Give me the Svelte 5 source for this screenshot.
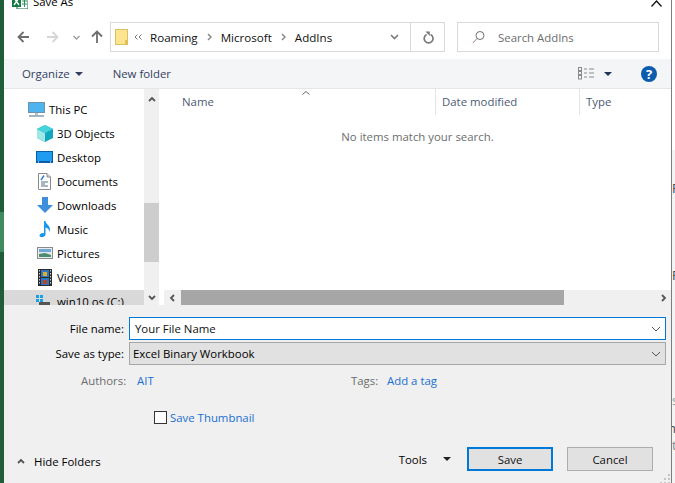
<script lang="ts">
	const folders = [
		{ name: '3D Objects', icon: 'cube' },
		{ name: 'Desktop', icon: 'desktop' },
		{ name: 'Documents', icon: 'doc' },
		{ name: 'Downloads', icon: 'down' },
		{ name: 'Music', icon: 'music' },
		{ name: 'Pictures', icon: 'pic' },
		{ name: 'Videos', icon: 'video' }
	];
</script>

<div class="screen">
	<div class="strip"></div>
	<div class="dialog">
		<div class="title">
			<svg class="xl" width="16" height="14" viewBox="0 0 16 14">
				<rect x="5" y="0" width="11" height="14" fill="#fff" stroke="#1d6f42" />
				<path d="M10 3 H15 M10 6 H15 M10 9 H15 M12.5 1 V12" stroke="#2f8f5b" />
				<rect x="0" y="1" width="9" height="11" fill="#107c41" />
				<path d="M2 3 L7 10 M7 3 L2 10" stroke="#fff" stroke-width="1.4" />
			</svg>
			<span class="title-text">Save As</span>
			<svg class="close" width="11" height="7" viewBox="0 0 11 7"><path d="M0.5 6.5 L5.5 1 L10.5 6.5" fill="none" stroke="#111" stroke-width="1.3" /></svg>
		</div>

		<div class="navbar">
			<div class="navbtns">
				<svg class="back" width="12" height="12" viewBox="0 0 12 12"><path d="M12 6 H1.5 M6.5 1 L1.5 6 L6.5 11" fill="none" stroke="#6d6d6d" stroke-width="1.8" /></svg>
				<svg class="forward" width="12" height="12" viewBox="0 0 12 12"><path d="M0 6 H10.5 M5.5 1 L10.5 6 L5.5 11" fill="none" stroke="#d6d6d6" stroke-width="1.8" /></svg>
				<svg class="recent" width="7" height="5" viewBox="0 0 7 5"><path d="M0.5 1 L3.5 4 L6.5 1" fill="none" stroke="#9a9a9a" stroke-width="1.4" /></svg>
				<svg class="up" width="12" height="13" viewBox="0 0 12 13"><path d="M6 13 V2 M1 6.5 L6 1.5 L11 6.5" fill="none" stroke="#6d6d6d" stroke-width="1.8" /></svg>
			</div>
			<div class="address">
				<svg class="folder" width="13" height="16" viewBox="0 0 13 16">
					<rect x="0.5" y="0.5" width="12" height="15" fill="#fde58f" stroke="#dcc064" />
					<rect x="10" y="11" width="2.5" height="4.5" fill="#e3bf52" />
				</svg>
				<svg class="chev" width="8" height="6" viewBox="0 0 8 6"><path d="M3.5 0.5 L1 3 L3.5 5.5 M7.5 0.5 L5 3 L7.5 5.5" fill="none" stroke="#7a7a7a" stroke-width="1" /></svg>
				<span class="crumb">Roaming</span>
				<svg class="sep" width="5" height="8" viewBox="0 0 5 8"><path d="M1 1 L4 4 L1 7" fill="none" stroke="#8a8a8a" stroke-width="1.5" /></svg>
				<span class="crumb">Microsoft</span>
				<svg class="sep" width="5" height="8" viewBox="0 0 5 8"><path d="M1 1 L4 4 L1 7" fill="none" stroke="#8a8a8a" stroke-width="1.5" /></svg>
				<span class="crumb">AddIns</span>
				<div class="addr-end">
					<svg width="9" height="6" viewBox="0 0 9 6"><path d="M1 1 L4.5 4.5 L8 1" fill="none" stroke="#7a7a7a" stroke-width="1.6" /></svg>
				</div>
				<div class="refresh">
					<svg width="11" height="13" viewBox="0 0 11 13"><path d="M3.6 3.6 A4.4 4.4 0 1 0 7.6 3.6" fill="none" stroke="#7a7a7a" stroke-width="1.7" /><path d="M2.4 0.6 L6.8 0.6 L6.8 5 Z" fill="#7a7a7a" /></svg>
				</div>
			</div>
			<div class="search">
				<svg width="13" height="14" viewBox="0 0 13 14"><circle cx="8" cy="5.5" r="4" fill="none" stroke="#707070" /><path d="M5 8.5 L0.8 13" stroke="#a87a70" stroke-width="1" /></svg>
				<span>Search AddIns</span>
			</div>
		</div>

		<div class="toolbar">
			<span>Organize</span>
			<span class="caret"></span>
			<span class="newfolder">New folder</span>
			<div class="toolright">
				<svg width="16" height="13" viewBox="0 0 16 13">
					<g fill="none" stroke="#8a8a8a"><rect x="0.5" y="0.5" width="3" height="3" /><rect x="0.5" y="4.5" width="3" height="3" /><rect x="0.5" y="8.5" width="3" height="3.5" /></g>
					<path d="M6 2 H9 M11 2 H16 M6 6 H9 M11 6 H16 M6 10 H9 M11 10 H16" stroke="#8a8a8a" />
				</svg>
				<span class="caret dark"></span>
				<span class="help">?</span>
			</div>
		</div>

		<div class="browser">
			<div class="tree">
				<div class="tree-list">
					<div class="row pc">
						<svg width="17" height="15" viewBox="0 0 17 15">
							<rect x="0.5" y="0.5" width="16" height="10" fill="#4fb4ee" stroke="#6f93a8" />
							<rect x="7" y="11" width="3" height="2" fill="#b8c4cc" />
							<rect x="1" y="13" width="15" height="2" fill="#a3b4bf" />
						</svg>
						<span>This PC</span>
					</div>
					{#each folders as f}
						<div class="row">
							<span class="ico">
								{#if f.icon === 'cube'}
									<svg width="16" height="17" viewBox="0 0 16 17">
										<path d="M8 0 L16 4 V13 L8 17 L0 13 V4 Z" fill="#14a6bd" />
										<path d="M0 4 L8 8 V17 L0 13 Z" fill="#9fe8e8" />
										<path d="M0 4 L8 0 L16 4 L8 8 Z" fill="#46d3dc" />
									</svg>
								{:else if f.icon === 'desktop'}
									<svg width="17" height="12" viewBox="0 0 17 12">
										<rect x="0" y="0" width="17" height="12" fill="#0c5ea8" />
										<rect x="1" y="1" width="15" height="9" fill="#1f9bf0" />
										<path d="M2 11 H3 M14 11 H15" stroke="#fff" />
									</svg>
								{:else if f.icon === 'doc'}
									<svg width="13" height="17" viewBox="0 0 13 17">
										<path d="M0.5 0.5 H9 L12.5 4 V16.5 H0.5 Z" fill="#fff" stroke="#8a8a8a" />
										<path d="M9 0.5 V4 H12.5" fill="#ddd" stroke="#8a8a8a" />
										<path d="M6 2.5 L3 7" stroke="#2b7cd3" stroke-width="1.4" />
										<path d="M3 9 H10 M3 11 H7 M3 13 H10" stroke="#4f6f86" />
									</svg>
								{:else if f.icon === 'down'}
									<svg width="16" height="16" viewBox="0 0 16 16"><path d="M5 0 H11 V8 H16 L8 16 L0 8 H5 Z" fill="#3d8fdc" /></svg>
								{:else if f.icon === 'music'}
									<svg width="12" height="17" viewBox="0 0 12 17"><path d="M5 0 H6.5 C7 4 12.5 4.5 10.5 11 C10.3 8 8 7 6.5 6.5 V13.5 C6.5 16 0.5 17.5 0.5 14.5 C0.5 12.5 3.5 11.5 5 12.2 Z" fill="#1a96ea" /></svg>
								{:else if f.icon === 'pic'}
									<svg width="16" height="12" viewBox="0 0 16 12">
										<rect x="0.5" y="0.5" width="15" height="11" fill="#e8eef0" stroke="#8a8a8a" />
										<rect x="2" y="2" width="12" height="3" fill="#6fa8d8" />
										<rect x="2" y="5" width="12" height="2" fill="#dce6e2" />
										<path d="M2 7 L8 6 L14 8 V10 H2 Z" fill="#4f8a72" />
									</svg>
								{:else}
									<svg width="14" height="17" viewBox="0 0 14 17">
										<rect x="0" y="0" width="14" height="17" fill="#2b2b2b" />
										<path d="M1.5 1 V16 M12.5 1 V16" stroke="#cfcfcf" stroke-dasharray="1.5 1.5" />
										<rect x="3" y="1" width="8" height="7" fill="#2d77c4" />
										<rect x="3" y="9" width="8" height="7" fill="#2d77c4" />
										<rect x="5" y="3" width="4" height="4" fill="#d8b02e" />
										<rect x="5" y="11" width="4" height="4" fill="#b3472e" />
									</svg>
								{/if}
							</span>
							<span>{f.name}</span>
						</div>
					{/each}
					<div class="row drive">
						<span class="ico top">
							<svg width="17" height="17" viewBox="0 0 17 17">
								<rect x="0" y="0" width="3" height="3" fill="#19a0ea" />
								<rect x="4" y="0" width="3" height="3" fill="#19a0ea" />
								<rect x="0" y="4" width="3" height="3" fill="#19a0ea" />
								<rect x="4" y="4" width="3" height="3" fill="#19a0ea" />
								<rect x="3" y="7" width="11" height="8" fill="#555" />
							</svg>
						</span>
						<span>win10 os (C:)</span>
					</div>
				</div>
				<div class="vscroll">
					<svg width="8" height="6" viewBox="0 0 8 6"><path d="M1 5 L4 2 L7 5" fill="none" stroke="#555" stroke-width="1.8" /></svg>
					<div class="vtrack"><div class="vthumb"></div></div>
					<svg width="8" height="6" viewBox="0 0 8 6"><path d="M1 1 L4 4 L7 1" fill="none" stroke="#555" stroke-width="1.8" /></svg>
				</div>
			</div>
			<div class="files">
				<div class="head">
					<div class="col name">Name<svg class="sort" width="8" height="4" viewBox="0 0 8 4"><path d="M0.5 3.5 L4 0.5 L7.5 3.5" fill="none" stroke="#666" /></svg></div>
					<div class="col date">Date modified</div>
					<div class="col type">Type</div>
				</div>
				<div class="empty">No items match your search.</div>
				<div class="hscroll">
					<svg width="6" height="8" viewBox="0 0 6 8"><path d="M5 1 L2 4 L5 7" fill="none" stroke="#555" stroke-width="1.8" /></svg>
					<div class="htrack"><div class="hthumb"></div></div>
					<svg width="6" height="8" viewBox="0 0 6 8"><path d="M1 1 L4 4 L1 7" fill="none" stroke="#555" stroke-width="1.8" /></svg>
				</div>
			</div>
		</div>

		<div class="form">
			<div class="field">
				<label for="fname">File name:</label>
				<div class="combo active">
					<input id="fname" value="Your File Name" />
					<svg width="10" height="6" viewBox="0 0 10 6"><path d="M1 1 L5 5 L9 1" fill="none" stroke="#555" /></svg>
				</div>
			</div>
			<div class="field second">
				<span class="lbl">Save as type:</span>
				<div class="combo grey">
					<span>Excel Binary Workbook</span>
					<svg width="10" height="6" viewBox="0 0 10 6"><path d="M1 1 L5 5 L9 1" fill="none" stroke="#555" /></svg>
				</div>
			</div>
			<div class="meta">
				<span class="meta-lbl authors">Authors:</span>
				<span class="link ait">AIT</span>
				<span class="meta-lbl tags">Tags:</span>
				<span class="link addtag">Add a tag</span>
			</div>
			<div class="thumb">
				<span class="box"></span>
				<span class="link">Save Thumbnail</span>
			</div>
			<div class="footer">
				<div class="hide">
					<svg width="8" height="6" viewBox="0 0 8 6"><path d="M1 5 L4 2 L7 5" fill="none" stroke="#555" stroke-width="1.8" /></svg>
					<span>Hide Folders</span>
				</div>
				<div class="actions">
					<span>Tools</span>
					<span class="caret dark2"></span>
					<button class="btn primary">Save</button>
					<button class="btn">Cancel</button>
				</div>
			</div>
			<svg class="grip" width="10" height="10" viewBox="0 0 10 10">
				<path d="M8 1 H10 V3 H8 Z M4 5 H6 V7 H4 Z M8 5 H10 V7 H8 Z M0 9 H2 V10 H0 Z M4 9 H6 V10 H4 Z M8 9 H10 V10 H8 Z" fill="#c4c4c4" />
			</svg>
		</div>
	</div>
	<div class="behind">
		<span class="frag f1">F</span>
		<span class="frag f2">F</span>
		<span class="frag f3">s</span>
		<span class="frag f4">n</span>
		<span class="frag f5">t</span>
	</div>
</div>

<style>
	:global(body) {
		margin: 0;
		background: #fff;
	}

	.screen {
		display: flex;
		width: 675px;
		height: 483px;
		overflow: hidden;
		font-family: 'Open Sans', 'Noto Sans', sans-serif;
		font-size: 11.4px;
		color: #000;
	}

	.strip {
		width: 4px;
		flex: none;
		background: linear-gradient(#1e5f3a 0 212px, #3f8a5e 212px 252px, #1e5f3a 252px);
	}

	.dialog {
		width: 668px;
		flex: none;
		display: flex;
		flex-direction: column;
		background: #fff;
		border-right: 1px solid #7d7d7d;
		box-sizing: border-box;
	}

	.behind {
		flex: 1;
		position: relative;
		background: linear-gradient(#fff 0 150px, #f4f4f4 150px);
		overflow: hidden;
	}

	.frag {
		position: absolute;
		left: 0;
		color: #444;
		font-size: 13px;
		line-height: 14px;
	}

	.f1 {
		top: 181px;
	}

	.f2 {
		top: 268px;
	}

	.f3 {
		top: 393px;
		color: #999;
	}

	.f4 {
		top: 421px;
		left: -4px;
	}

	.f5 {
		top: 438px;
		color: #888;
	}

	.title {
		height: 27px;
		display: flex;
		align-items: flex-start;
		padding-left: 8px;
		margin-top: -5px;
		flex: none;
	}

	.title-text {
		margin-left: 5px;
		line-height: 14px;
	}

	.close {
		margin-left: auto;
		margin-right: 9px;
		margin-top: 5px;
	}

	.navbar {
		height: 30px;
		display: flex;
		align-items: center;
		flex: none;
	}

	.navbtns {
		width: 106px;
		display: flex;
		align-items: center;
		padding-left: 13px;
		box-sizing: border-box;
	}

	.forward {
		margin-left: 18px;
	}

	.recent {
		margin-left: 14px;
	}

	.up {
		margin-left: 11px;
		margin-top: -1px;
	}

	.address {
		width: 335px;
		height: 30px;
		border: 1px solid #d9d9d9;
		box-sizing: border-box;
		display: flex;
		align-items: center;
		padding-left: 4px;
	}

	.chev {
		margin-left: 6px;
		margin-right: 8px;
	}

	.crumb {
		color: #111;
		font-size: 11.6px;
	}

	.sep {
		margin: 0 9px;
	}

	.addr-end {
		margin-left: auto;
		width: 32px;
		height: 100%;
		display: flex;
		align-items: center;
		justify-content: center;
		border-right: 1px solid #d9d9d9;
		box-sizing: border-box;
	}

	.refresh {
		width: 33px;
		padding-left: 2px;
		box-sizing: border-box;
		display: flex;
		justify-content: center;
	}

	.search {
		width: 202px;
		height: 30px;
		margin-left: 12px;
		border: 1px solid #d9d9d9;
		box-sizing: border-box;
		display: flex;
		align-items: center;
		padding-left: 14px;
		gap: 13px;
		color: #6d6d6d;
	}

	.toolbar {
		height: 30px;
		flex: none;
		background: #f4f5f7;
		border-bottom: 1px solid #e6e6e6;
		box-sizing: border-box;
		display: flex;
		align-items: center;
		padding-left: 18px;
		color: #33415f;
		margin-top: 7px;
	}

	.caret {
		width: 0;
		height: 0;
		border-left: 4px solid transparent;
		border-right: 4px solid transparent;
		border-top: 4px solid #33415f;
		margin-left: 5px;
	}

	.newfolder {
		margin-left: 30px;
	}

	.toolright {
		margin-left: auto;
		display: flex;
		align-items: center;
	}

	.caret.dark {
		margin-left: 10px;
		border-top-color: #1d3557;
	}

	.help {
		margin: 0 14px 0 29px;
		width: 16px;
		height: 16px;
		border-radius: 50%;
		background: #0b5cad;
		color: #fff;
		font-weight: 700;
		font-size: 13px;
		line-height: 16px;
		text-align: center;
	}

	.browser {
		height: 216px;
		flex: none;
		display: flex;
	}

	.tree {
		width: 155px;
		flex: none;
		display: flex;
		overflow: hidden;
	}

	.tree-list {
		width: 140px;
		flex: none;
		padding-top: 9px;
		box-sizing: border-box;
		overflow: hidden;
	}

	.row {
		height: 24px;
		display: flex;
		align-items: center;
		padding-left: 32px;
	}

	.row.pc {
		height: 23px;
		padding-left: 24px;
		gap: 4px;
	}

	.ico {
		width: 17px;
		margin-right: 4px;
		display: flex;
		justify-content: center;
	}

	.ico.top {
		align-self: flex-end;
	}

	.row.drive {
		background: #d9d9d9;
		margin-top: 1px;
		height: 22px;
	}

	.vscroll {
		width: 15px;
		flex: none;
		height: 216px;
		background: #f0f0f0;
		display: flex;
		flex-direction: column;
		align-items: center;
		padding: 7px 0 4px;
		box-sizing: border-box;
	}

	.vtrack {
		flex: 1;
		width: 100%;
		margin: 5px 0;
		position: relative;
	}

	.vthumb {
		position: absolute;
		top: 96px;
		height: 59px;
		width: 100%;
		background: #cdcdcd;
	}

	.files {
		flex: 1;
		min-width: 0;
		margin-left: 5px;
		display: flex;
		flex-direction: column;
	}

	.head {
		height: 26px;
		flex: none;
		display: flex;
		color: #4d5a75;
	}

	.col {
		line-height: 26px;
		border-right: 1px solid #e5e5e5;
		box-sizing: border-box;
		position: relative;
		padding-left: 6px;
	}

	.col.name {
		width: 272px;
		padding-left: 18px;
	}

	.sort {
		position: absolute;
		left: 138px;
		top: 2px;
	}

	.col.date {
		width: 144px;
	}

	.col.type {
		border-right: none;
	}

	.empty {
		flex: 1;
		text-align: center;
		padding-top: 14px;
		color: #6d6d6d;
		box-sizing: border-box;
	}

	.hscroll {
		height: 15px;
		flex: none;
		background: #f0f0f0;
		display: flex;
		align-items: center;
		padding: 0 4px 0 5px;
	}

	.htrack {
		flex: 1;
		height: 100%;
		margin: 0 5px 0 6px;
	}

	.hthumb {
		width: 383px;
		height: 100%;
		background: #a6a6a6;
	}

	.form {
		flex: 1;
		position: relative;
		background: #f0f0f0;
		display: flex;
		flex-direction: column;
		padding-top: 12px;
	}

	.field {
		display: flex;
		align-items: center;
		height: 23px;
		gap: 5px;
	}

	.field.second {
		margin-top: 2px;
	}

	.field label,
	.lbl {
		width: 120px;
		text-align: right;
		padding-bottom: 1px;
	}

	.combo {
		width: 537px;
		height: 23px;
		box-sizing: border-box;
		display: flex;
		align-items: center;
		padding: 0 4px 0 3px;
		border: 1px solid #a6a6a6;
	}

	.combo.active {
		border-color: #0078d7;
		background: #fff;
		padding-left: 5px;
	}

	.combo.grey {
		background: #e1e1e1;
	}

	.combo svg {
		margin-left: auto;
		flex: none;
	}

	.combo input {
		border: none;
		outline: none;
		padding: 0 0 1px;
		background: transparent;
		font: inherit;
		color: #111;
		flex: 1;
		min-width: 0;
	}

	.meta {
		display: flex;
		margin-top: 5px;
		height: 20px;
		align-items: center;
	}

	.meta-lbl {
		color: #6d6d6d;
	}

	.authors {
		margin-left: 77px;
		width: 56px;
	}

	.ait {
		width: 214px;
	}

	.tags {
		width: 36px;
	}

	.link {
		color: #1a6fd0;
	}

	.thumb {
		display: flex;
		align-items: center;
		gap: 3px;
		margin-top: 17px;
		padding-left: 150px;
		height: 20px;
	}

	.box {
		width: 11px;
		height: 11px;
		border: 1px solid #333;
		background: #fff;
	}

	.footer {
		display: flex;
		margin-top: 20px;
		padding-left: 13px;
		height: 24px;
	}

	.hide {
		display: flex;
		align-items: center;
		gap: 9px;
		margin-top: 2px;
		height: 24px;
	}

	.actions {
		margin-left: auto;
		display: flex;
		align-items: center;
		margin-right: 18px;
	}

	.caret.dark2 {
		margin-left: 16px;
		border-top-color: #222;
	}

	.btn {
		width: 86px;
		height: 24px;
		margin-left: 14px;
		background: #e1e1e1;
		border: 1px solid #adadad;
		font: inherit;
		color: #111;
		padding: 0;
	}

	.btn.primary {
		border: 2px solid #0078d7;
		margin-left: 16px;
	}

	.grip {
		position: absolute;
		right: 1px;
		bottom: 0;
	}
</style>
